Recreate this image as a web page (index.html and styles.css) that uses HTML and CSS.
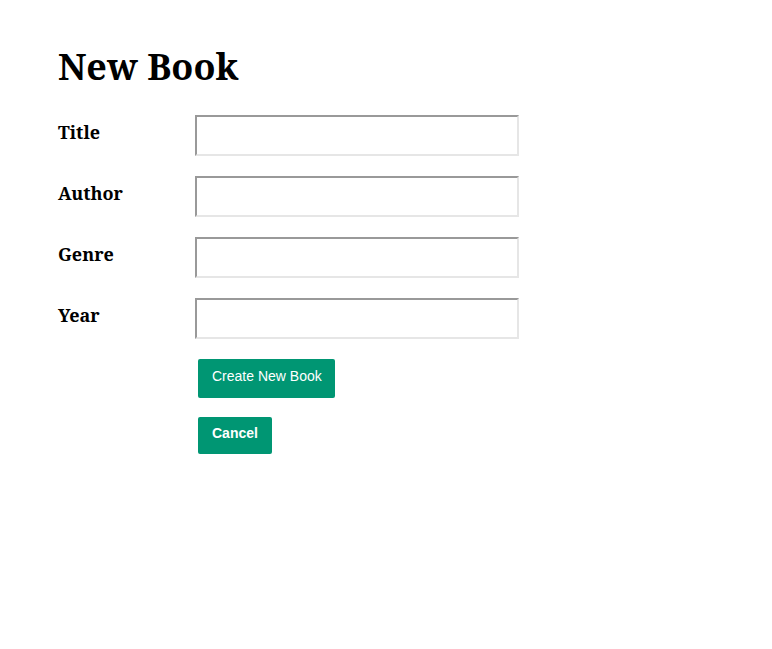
FILE: index.html
```html
<!DOCTYPE html>
<html>
<head>
<meta charset="utf-8">
<title>New Book</title>
<link rel="stylesheet" href="styles.css">
</head>
<body>
<main class="page">
  <h1 class="title">New Book</h1>
  <form class="form">
    <div class="row">
      <label class="label">Title</label>
      <input class="field" type="text">
    </div>
    <div class="row">
      <label class="label">Author</label>
      <input class="field" type="text">
    </div>
    <div class="row">
      <label class="label">Genre</label>
      <input class="field" type="text">
    </div>
    <div class="row">
      <label class="label">Year</label>
      <input class="field" type="text">
    </div>
    <div class="actions">
      <button class="btn btn-create" type="button">Create New Book</button>
      <button class="btn btn-cancel" type="button">Cancel</button>
    </div>
  </form>
</main>
</body>
</html>
```

FILE: styles.css
```css
html, body {
  margin: 0;
  padding: 0;
  background: #fff;
}
.page {
  padding: 45px 58px;
  font-family: "Noto Serif", "DejaVu Serif", serif;
  color: #000;
}
.title {
  margin: 0 0 26px 0;
  font-size: 36px;
  font-weight: 700;
  line-height: 44px;
}
.form {
  display: flex;
  flex-direction: column;
  gap: 20px;
}
.row {
  display: grid;
  grid-template-columns: 137px 324px;
  align-items: start;
}
.label {
  font-size: 18px;
  font-weight: 700;
  padding-top: 5px;
}
.field {
  box-sizing: border-box;
  width: 324px;
  height: 41px;
  margin: 0;
  border-style: solid;
  border-width: 2px;
  border-top-color: #999;
  border-left-color: #999;
  border-bottom-color: #e6e6e6;
  border-right-color: #e6e6e6;
  background: #fff;
}
.actions {
  display: flex;
  flex-direction: column;
  align-items: flex-start;
  gap: 19px;
  padding-left: 140px;
}
.btn {
  background: #009673;
  color: #fff;
  border: none;
  border-radius: 2px;
  margin: 0;
  font-family: "Liberation Sans", Arial, sans-serif;
  font-size: 14px;
  line-height: 16px;
}
.btn-create {
  font-weight: 400;
  padding: 9px 13px 14px 14px;
}
.btn-cancel {
  font-weight: 700;
  padding: 8px 14px 13px;
}
```
